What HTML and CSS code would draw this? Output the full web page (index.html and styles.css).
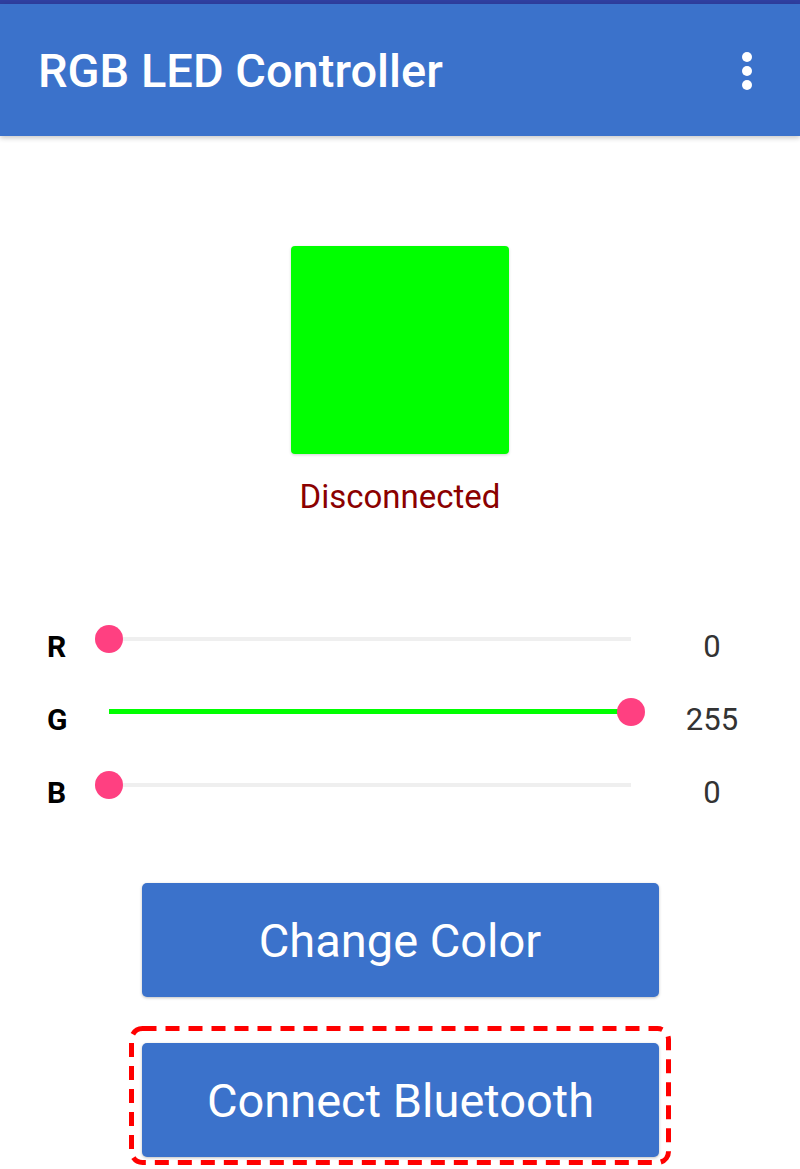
FILE: index.html
```html
<!DOCTYPE html>
<html>
<head>
<meta charset="utf-8">
<link rel="stylesheet" href="styles.css">
</head>
<body>
<div class="statusbar"></div>
<header class="appbar">
  <h1 class="title">RGB LED Controller</h1>
  <svg class="menu" width="12" height="40" viewBox="0 0 12 40"><circle cx="6" cy="6" r="5"/><circle cx="6" cy="20" r="5"/><circle cx="6" cy="34" r="5"/></svg>
</header>
<main class="content">
  <div class="preview"></div>
  <div class="status">Disconnected</div>
  <div class="sliders">
    <div class="row">
      <span class="label">R</span>
      <div class="slider"><div class="thumb" style="left:0%"></div></div>
      <span class="value">0</span>
    </div>
    <div class="row">
      <span class="label">G</span>
      <div class="slider"><div class="fill" style="width:100%"></div><div class="thumb" style="left:100%"></div></div>
      <span class="value">255</span>
    </div>
    <div class="row">
      <span class="label">B</span>
      <div class="slider"><div class="thumb" style="left:0%"></div></div>
      <span class="value">0</span>
    </div>
  </div>
  <div class="actions">
    <button class="btn">Change Color</button>
    <div class="highlight">
      <svg class="dash" width="542" height="139" viewBox="0 0 542 139"><rect x="2.5" y="2.5" width="537" height="134" rx="11" ry="11"/></svg>
      <button class="btn">Connect Bluetooth</button>
    </div>
  </div>
</main>
</body>
</html>
```
FILE: styles.css
```css
* { box-sizing: border-box; }
html, body { margin: 0; padding: 0; background: #fff; }
body { font-family: Roboto, "Noto Sans", sans-serif; width: 800px; height: 1169px; overflow: hidden; }
.statusbar { height: 4px; background: #2f3fa0; }
.appbar {
  height: 132px; background: #3b72cb; display: flex; align-items: center;
  justify-content: space-between; padding: 0 47px 0 38px;
  box-shadow: 0 2px 5px rgba(0,0,0,0.22); position: relative; z-index: 1;
}
.title { margin: 0; color: #fff; font-weight: 500; font-size: 47px; letter-spacing: 0; margin-top: 0; }
.menu { fill: #fff; margin-top: 1px; }
.content { display: flex; flex-direction: column; align-items: center; }
.preview {
  width: 218px; height: 208px; background: #00ff00; border-radius: 4px; margin-top: 110px;
  box-shadow: 0 1px 3px rgba(0,0,0,0.18);
}
.status { color: #8b0000; font-size: 33px; margin-top: 23px; line-height: 40px; }
.sliders { width: 800px; margin-top: 93px; padding-left: 47px; }
.row { display: grid; grid-template-columns: 62px 522px 162px; height: 73px; align-items: center; }
.label { font-weight: 700; font-size: 30px; color: #000; }
.slider { position: relative; height: 4px; margin-bottom: 16px; background: #efefef; }
.fill { height: 5px; background: #00ff00; margin-top: -0.5px; }
.thumb {
  position: absolute; top: 50%; width: 28px; height: 28px; margin: -14px 0 0 -14px;
  border-radius: 50%; background: #ff4081;
}
.value { text-align: center; font-size: 31px; color: #333; }
.actions { display: flex; flex-direction: column; align-items: center; margin-top: 54px; }
.btn {
  width: 517px; height: 114px; background: #3b72cb; color: #fff; border: none; border-radius: 5px;
  font-family: Roboto, sans-serif; font-size: 47px; box-shadow: 0 1px 3px rgba(0,0,0,0.25);
  padding: 0;
}
.highlight {
  position: relative; width: 542px; height: 139px; margin-top: 29px;
  padding: 17px 14px 7px 13px;
}
.dash { position: absolute; left: 0; top: 0; fill: none; stroke: #ff0000; stroke-width: 5; stroke-dasharray: 14 9; }
```
